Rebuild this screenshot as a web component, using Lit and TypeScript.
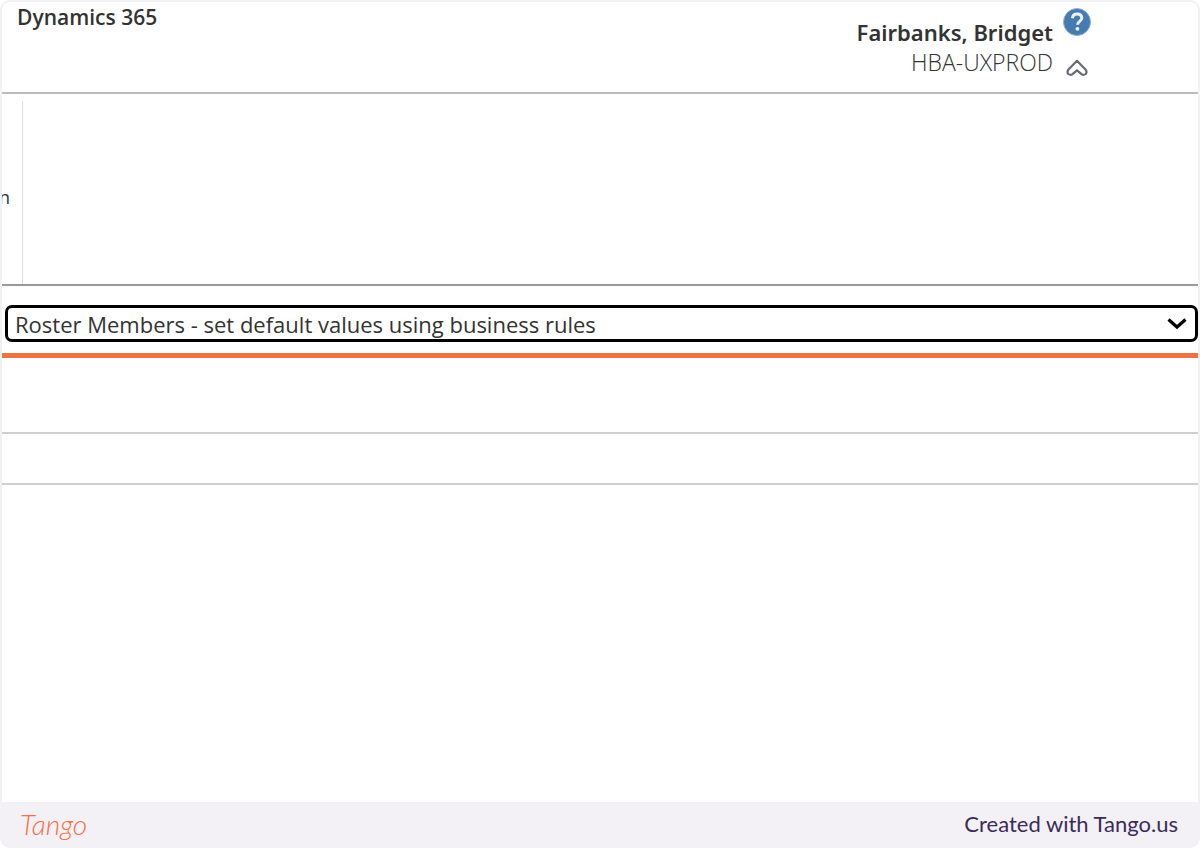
import { LitElement, html, css } from "lit";
import { customElement, property } from "lit/decorators.js";

@customElement("app-header")
class AppHeader extends LitElement {
  @property() user = "";
  @property() organization = "";

  static styles = css`
    :host {
      display: flex;
      justify-content: space-between;
      align-items: flex-start;
      box-sizing: border-box;
      min-height: 92px;
      padding: 0 106px 0 15px;
      border-bottom: 2px solid #bcbcbc;
      color: #333;
    }
    .product {
      margin: 0;
      font-size: 21px;
      line-height: 30px;
      font-weight: 600;
    }
    .account {
      display: flex;
      gap: 9px;
    }
    .identity {
      padding-top: 15px;
      text-align: right;
      line-height: 30px;
    }
    .user {
      font-family: "Noto Sans", sans-serif;
      font-size: 22px;
      font-weight: 600;
    }
    .organization {
      font-size: 23px;
      font-weight: 300;
      color: #333;
    }
    .actions {
      display: flex;
      flex-direction: column;
      align-items: center;
      gap: 22px;
      padding-top: 5px;
    }
    button {
      display: block;
      padding: 0;
      border: 0;
      background: none;
    }
    svg {
      display: block;
    }
  `;

  render() {
    return html`
      <h1 class="product">Dynamics 365</h1>
      <div class="account">
        <div class="identity">
          <div class="user">${this.user}</div>
          <div class="organization">${this.organization}</div>
        </div>
        <div class="actions">
          <button aria-label="Help">
            <svg width="30" height="30" viewBox="0 0 30 30" fill="none">
              <circle cx="15" cy="15" r="13.5" fill="#467bb0" stroke="#8fb0d2" />
              <path d="M10.400 11.200c.4-2.900 2.100-4.200 4.700-4.200 2.800 0 4.700 1.600 4.700 4.100 0 3.300-4.300 3.300-4.300 6.600" stroke="#e9f1f9" stroke-width="3" />
              <circle cx="15.400" cy="21.800" r="1.900" fill="#e9f1f9" />
            </svg>
          </button>
          <button aria-label="Collapse ribbon">
            <svg width="22" height="18" viewBox="0 0 22 18" fill="none" stroke="#696c72" stroke-width="2.200" stroke-linejoin="round">
              <path d="M11 1.800 2.500 10.500Q.6 13 2.300 15q2.200 1.700 4.200.2L11 11.300l4.500 3.900q2 1.500 4.200-.2 1.700-2-.2-4.500z" />
            </svg>
          </button>
        </div>
      </div>
    `;
  }
}

@customElement("process-picker")
class ProcessPicker extends LitElement {
  @property({ type: Array }) options: string[] = [];

  static styles = css`
    :host {
      display: block;
      padding: 19px 0 11px 3px;
      border-bottom: 5px solid #ed7240;
    }
    .field {
      display: grid;
      align-items: center;
    }
    select,
    svg {
      grid-area: 1 / 1;
    }
    select {
      appearance: none;
      box-sizing: border-box;
      width: 100%;
      height: 37px;
      margin: 0;
      padding: 0 40px 0 7px;
      border: 3px solid #000;
      border-radius: 7px;
      outline: none;
      background: #fff;
      color: #333;
      font: 22px/30px "Open Sans", sans-serif;
    }
    svg {
      justify-self: end;
      margin-right: 11px;
      pointer-events: none;
    }
  `;

  render() {
    return html`
      <div class="field">
        <select aria-label="Process">
          ${this.options.map((o) => html`<option>${o}</option>`)}
        </select>
        <svg width="20" height="14" viewBox="0 0 20 14" fill="none" stroke="#000" stroke-width="3.200">
          <path d="m1.500 2.500 8.500 7.500 8.500-7.500" />
        </svg>
      </div>
    `;
  }
}

@customElement("app-root")
class AppRoot extends LitElement {
  static styles = css`
    :host {
      display: flex;
      flex-direction: column;
      min-height: 100vh;
      background: #f3f1f6;
      border-radius: 10px;
      overflow: hidden;
      font-family: "Open Sans", "Noto Sans", sans-serif;
    }
    .page {
      flex: 1;
      margin: 2px 2px 0;
      background: #fff;
      border-radius: 8px 8px 0 0;
      overflow: hidden;
    }
    .ribbon {
      display: flex;
      height: 183px;
      padding-top: 7px;
      border-bottom: 2px solid #999;
    }
    .group {
      display: flex;
      align-items: center;
      justify-content: flex-end;
      box-sizing: border-box;
      width: 21px;
      padding: 8px 12px 0 0;
      border-right: 1px solid #ddd;
      overflow: hidden;
      color: #333;
      font-size: 18px;
      line-height: 24px;
    }
    .strip {
      border-bottom: 2px solid #d0d0d0;
      height: 49px;
    }
    .strip.tall {
      height: 74px;
    }
    footer {
      display: flex;
      align-items: center;
      justify-content: space-between;
      box-sizing: border-box;
      height: 46px;
      padding: 0 22px 2px 20px;
      font-size: 22px;
      line-height: 30px;
      color: #3c2b58;
      font-family: Lato, sans-serif;
    }
    .brand {
      color: #fb6f45;
      font-size: 28px;
      font-style: italic;
      font-weight: 300;
      text-decoration: none;
    }
  `;

  render() {
    return html`
      <main class="page">
        <app-header user="Fairbanks, Bridget" organization="HBA-UXPROD"></app-header>
        <div class="ribbon"><div class="group">n</div></div>
        <process-picker
          .options=${["Roster Members - set default values using business rules"]}
        ></process-picker>
        <div class="strip tall"></div>
        <div class="strip"></div>
      </main>
      <footer>
        <a class="brand" href="#">Tango</a>
        <span>Created with Tango.us</span>
      </footer>
    `;
  }
}
